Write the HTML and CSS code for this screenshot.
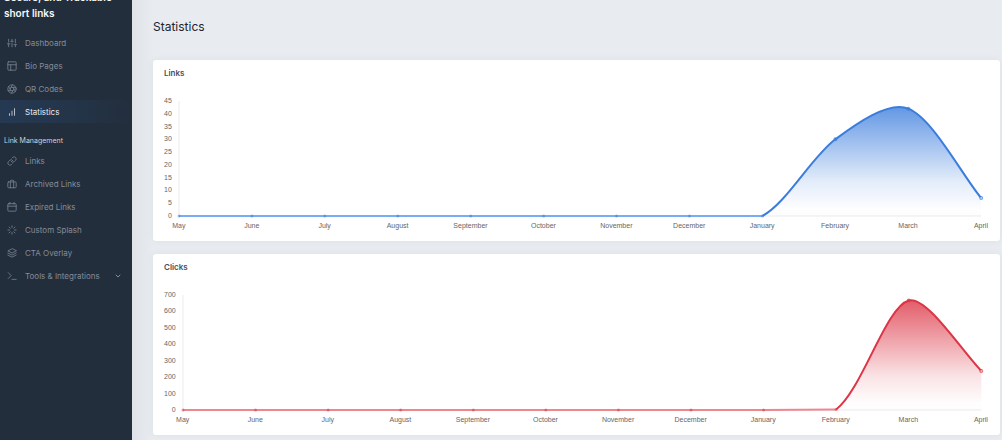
FILE: index.html
```html
<!DOCTYPE html>
<html lang="en">
<head>
<meta charset="utf-8">
<meta name="viewport" content="width=device-width, initial-scale=1">
<title>Statistics</title>
<link rel="stylesheet" href="styles.css">
</head>
<body>
<div class="app">
  <aside class="sidebar">
    <a class="brand" href="#">Secure, and Trackable short links</a>
    <nav class="nav">
      <a class="nav-link" href="#"><svg class="icon" viewBox="0 0 24 24"><path d="M4 21v-7M4 10V3M12 21v-9M12 8V3M20 21v-5M20 12V3M1 14h6M9 8h6M17 16h6"/></svg>Dashboard</a>
      <a class="nav-link" href="#"><svg class="icon" viewBox="0 0 24 24"><rect x="2" y="2" width="20" height="20" rx="2"/><path d="M2 9h20M9 22V9"/></svg>Bio Pages</a>
      <a class="nav-link" href="#"><svg class="icon" viewBox="0 0 24 24"><circle cx="12" cy="12" r="10"/><path d="M14.31 8l5.74 9.94M9.69 8h11.48M7.38 12l5.74-9.94M9.69 16L3.95 6.06M14.31 16H2.83M16.62 12l-5.74 9.94"/></svg>QR Codes</a>
      <a class="nav-link active" href="#" aria-current="page"><svg class="icon" viewBox="0 0 24 24"><path d="M12 20V10M18 20V4M6 20v-4"/></svg>Statistics</a>
      <h2 class="nav-header">Link Management</h2>
      <a class="nav-link" href="#"><svg class="icon" viewBox="0 0 24 24"><path d="M10 13a5 5 0 0 0 7.54.54l3-3a5 5 0 0 0-7.07-7.07l-1.72 1.71"/><path d="M14 11a5 5 0 0 0-7.54-.54l-3 3a5 5 0 0 0 7.07 7.07l1.71-1.71"/></svg>Links</a>
      <a class="nav-link" href="#"><svg class="icon" viewBox="0 0 24 24"><rect x="2" y="7" width="20" height="14" rx="2"/><path d="M16 21V5a2 2 0 0 0-2-2h-4a2 2 0 0 0-2 2v16"/></svg>Archived Links</a>
      <a class="nav-link" href="#"><svg class="icon" viewBox="0 0 24 24"><rect x="2" y="4" width="20" height="18" rx="2"/><path d="M17 1v4M7 1v4M2 10h20"/></svg>Expired Links</a>
      <a class="nav-link" href="#"><svg class="icon" viewBox="0 0 24 24"><path d="M12 2v4M12 18v4M4.93 4.93l2.83 2.83M16.24 16.24l2.83 2.83M2 12h4M18 12h4M4.93 19.07l2.83-2.83M16.24 7.76l2.83-2.83"/></svg>Custom Splash</a>
      <a class="nav-link" href="#"><svg class="icon" viewBox="0 0 24 24"><path d="M12 2L2 7l10 5 10-5zM2 17l10 5 10-5M2 12l10 5 10-5"/></svg>CTA Overlay</a>
      <a class="nav-link" href="#"><svg class="icon" viewBox="0 0 24 24"><path d="M3 18l7-7-7-7M12 20h10"/></svg>Tools &amp; Integrations<svg class="chevron" viewBox="0 0 8 8"><path d="M2 3l2 2 2-2"/></svg></a>
    </nav>
  </aside>

  <main class="content">
    <h1 class="page-title">Statistics</h1>

    <section class="card">
      <h2 class="card-title">Links</h2>
      <div class="chart">
        <div class="y-axis"><span>45</span><span>40</span><span>35</span><span>30</span><span>25</span><span>20</span><span>15</span><span>10</span><span>5</span><span>0</span></div>
        <svg class="plot blue" viewBox="0 0 801 115" preserveAspectRatio="none" role="img" aria-label="Links per month">
          <defs><linearGradient id="fill-links" gradientUnits="userSpaceOnUse" x1="0" y1="0" x2="0" y2="108"><stop offset="0" stop-color="#3b7ddd" stop-opacity=".85"/><stop offset=".75" stop-color="#3b7ddd" stop-opacity=".14"/><stop offset="1" stop-color="#3b7ddd" stop-opacity=".01"/></linearGradient></defs>
          <path class="axis" d="M0 0V115H801"/>
          <path fill="url(#fill-links)" d="M582.5 115C606.6 102.3 632 55.5 655.4 38.3C672.8 25.5 708 -1 728.2 7.7C752.4 17.5 780.6 72 801 97.1V115Z"/>
          <path class="flat" d="M0 115H582.5"/>
          <path class="line" d="M582.5 115C606.6 102.3 632 55.5 655.4 38.3C672.8 25.5 708 -1 728.2 7.7C752.4 17.5 780.6 72 801 97.1"/>
          <path class="dot base" d="M0 115h0M72.8 115h0M145.6 115h0M218.5 115h0M291.3 115h0M364.1 115h0M436.9 115h0M509.7 115h0M582.5 115h0"/>
          <path class="dot" d="M655.4 38.3h0M728.2 7.7h0M801 97.1h0"/>
          <path class="dot-core" d="M801 97.1h0"/>
        </svg>
        <div class="x-axis"><span>May</span><span>June</span><span>July</span><span>August</span><span>September</span><span>October</span><span>November</span><span>December</span><span>January</span><span>February</span><span>March</span><span>April</span></div>
      </div>
    </section>

    <section class="card">
      <h2 class="card-title">Clicks</h2>
      <div class="chart">
        <div class="y-axis"><span>700</span><span>600</span><span>500</span><span>400</span><span>300</span><span>200</span><span>100</span><span>0</span></div>
        <svg class="plot red" viewBox="0 0 798 115" preserveAspectRatio="none" role="img" aria-label="Clicks per month">
          <defs><linearGradient id="fill-clicks" gradientUnits="userSpaceOnUse" x1="0" y1="0" x2="0" y2="108"><stop offset="0" stop-color="#dc3545" stop-opacity=".85"/><stop offset=".75" stop-color="#dc3545" stop-opacity=".14"/><stop offset="1" stop-color="#dc3545" stop-opacity=".01"/></linearGradient></defs>
          <path class="axis" d="M0 0V115H798"/>
          <path fill="url(#fill-clicks)" d="M652.9 114.5C679 94.4 702.6 11.6 725.5 5.5C743.2 .8 777 54 798 76V115H652.9Z"/>
          <path class="flat" d="M0 115H580.4L652.9 114.5"/>
          <path class="line" d="M652.9 114.5C679 94.4 702.6 11.6 725.5 5.5C743.2 .8 777 54 798 76"/>
          <path class="dot base" d="M0 115h0M72.5 115h0M145.1 115h0M217.6 115h0M290.2 115h0M362.7 115h0M435.3 115h0M507.8 115h0M580.4 115h0M652.9 114.5h0"/>
          <path class="dot" d="M725.5 5.5h0M798 76h0"/>
          <path class="dot-core" d="M798 76h0"/>
        </svg>
        <div class="x-axis"><span>May</span><span>June</span><span>July</span><span>August</span><span>September</span><span>October</span><span>November</span><span>December</span><span>January</span><span>February</span><span>March</span><span>April</span></div>
      </div>
    </section>
  </main>
</div>
</body>
</html>
```
FILE: styles.css
```css
* { box-sizing: border-box; }

body {
  margin: 0;
  background: #e8ebf0;
  color: #495057;
  font: 8px/12px Inter, sans-serif;
}

h1, h2 { margin: 0; }

.app {
  display: flex;
  min-height: 100vh;
  overflow: hidden;
}

.sidebar {
  flex: 0 0 132px;
  background: #222e3c;
}

/* The sidebar is scrolled, so the first brand line is cut by the window. */
.brand {
  display: block;
  margin-top: -11px;
  padding: 0 16px 0 4px;
  color: #f8f9fa;
  font-size: 10px;
  font-weight: 600;
  line-height: 16px;
  text-decoration: none;
}

.nav { padding-top: 10px; }

.nav-link {
  display: flex;
  align-items: center;
  gap: 8px;
  height: 23px;
  padding: 0 10px 0 7px;
  color: #848c97;
  text-decoration: none;
}

.nav-link.active {
  color: #e9ecef;
  background: linear-gradient(90deg, rgba(59, 125, 221, .14), rgba(59, 125, 221, .09) 50%, transparent);
}

.nav-header {
  padding: 12px 4px 2px;
  color: #ced4da;
  font-size: 7px;
  font-weight: 400;
}

.icon, .chevron {
  fill: none;
  stroke: currentColor;
  stroke-linecap: round;
  stroke-linejoin: round;
}

.icon {
  width: 10px;
  height: 10px;
  stroke-width: 2;
  opacity: .9;
}

.chevron {
  width: 8px;
  height: 8px;
  margin-left: auto;
}

.content {
  display: flex;
  flex: 1;
  flex-direction: column;
  gap: 13px;
  min-width: 0;
  padding: 18px 2px 6px 21px;
  background: linear-gradient(90deg, #dfe2e6, #e8ebf0 21px);
}

.page-title {
  margin-bottom: 11px;
  color: #212529;
  font-size: 12px;
  font-weight: 400;
  line-height: 18px;
}

.card {
  padding: 7px 19px 9px 11px;
  border-radius: 3px;
  background: #fff;
  box-shadow: 0 0 8px rgba(33, 37, 41, .05);
}

.card-title {
  margin-bottom: 22px;
  font-size: 8px;
  font-weight: 600;
}

.chart {
  display: grid;
  grid-template-columns: auto 1fr;
  column-gap: 7px;
  row-gap: 4px;
  color: #666;
  font: 7px/12px "Liberation Sans", Arial, sans-serif;
}

.y-axis {
  display: flex;
  flex-direction: column;
  justify-content: space-between;
  text-align: right;
}

.y-axis span {
  height: 0;
  line-height: 0;
}

.x-axis {
  display: flex;
  grid-column: 2;
  justify-content: space-between;
}

.x-axis span {
  display: flex;
  justify-content: center;
  width: 0;
}

.plot {
  display: block;
  width: 100%;
  height: 115px;
  overflow: visible;
}

.blue { --series: #3b7ddd; --soft: #78adf5; --core: #b5d2f9; }
.red { --series: #dc3545; --soft: #ef858f; --core: #f7b5bb; }

.axis, .flat, .line, .dot, .dot-core {
  fill: none;
  vector-effect: non-scaling-stroke;
}

.axis { stroke: #ebebeb; }
.flat { stroke: var(--soft); stroke-width: 2; }
.line { stroke: var(--series); stroke-width: 2; }
.dot { stroke: var(--series); stroke-width: 4; stroke-linecap: round; opacity: .7; }
.dot.base { stroke-width: 3; opacity: .5; }
.dot-core { stroke: var(--core); stroke-width: 2; stroke-linecap: round; }
```
